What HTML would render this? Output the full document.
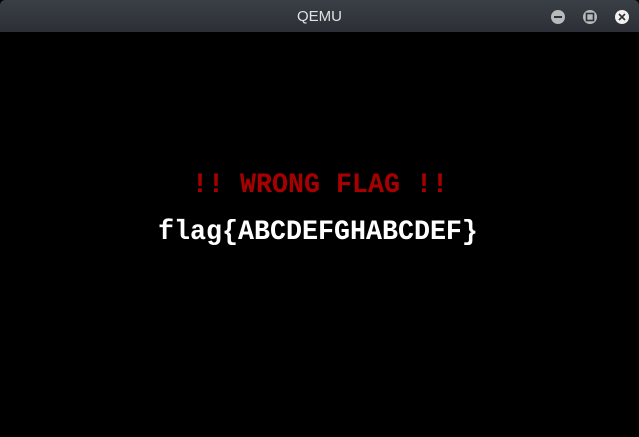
<!DOCTYPE html>
<html><head><meta charset="utf-8"><style>
html,body{margin:0;padding:0;width:639px;height:437px;background:#000;overflow:hidden}
.bar{position:absolute;left:0;top:0;width:639px;height:32px;background:linear-gradient(#3a3f46,#2c3036);border-radius:5px 5px 0 0}
.title{position:absolute;left:0;width:639px;top:8px;text-align:center;color:#dfe1e3;font:15px "Liberation Sans",sans-serif}
.t{position:absolute;font-family:"Liberation Mono",monospace;font-weight:bold;white-space:pre;transform-origin:0 0;line-height:1}
.r{left:192px;top:172px;font-size:26.67px;color:#a80000;transform:scaleY(1.05)}
.w{left:158px;top:219px;font-size:26.67px;color:#fff;transform:scaleY(1.05)}
</style></head><body>
<div class="bar"><div class="title">QEMU</div>
<svg width="639" height="32" style="position:absolute;left:0;top:0">
<circle cx="558" cy="17" r="7" fill="#b8babc"/><rect x="554" y="16" width="8" height="2" fill="#2e3238"/>
<circle cx="590" cy="17" r="7" fill="#b8babc"/><rect x="586.5" y="13.5" width="7" height="7" fill="none" stroke="#2e3238" stroke-width="1.6"/>
<circle cx="622" cy="17" r="7" fill="#f2f2f2"/><path d="M619 14L625 20M625 14L619 20" stroke="#2e3238" stroke-width="1.6"/>
</svg></div>
<div class="t r">!! WRONG FLAG !!</div>
<div class="t w">flag{ABCDEFGHABCDEF}</div>
</body></html>
